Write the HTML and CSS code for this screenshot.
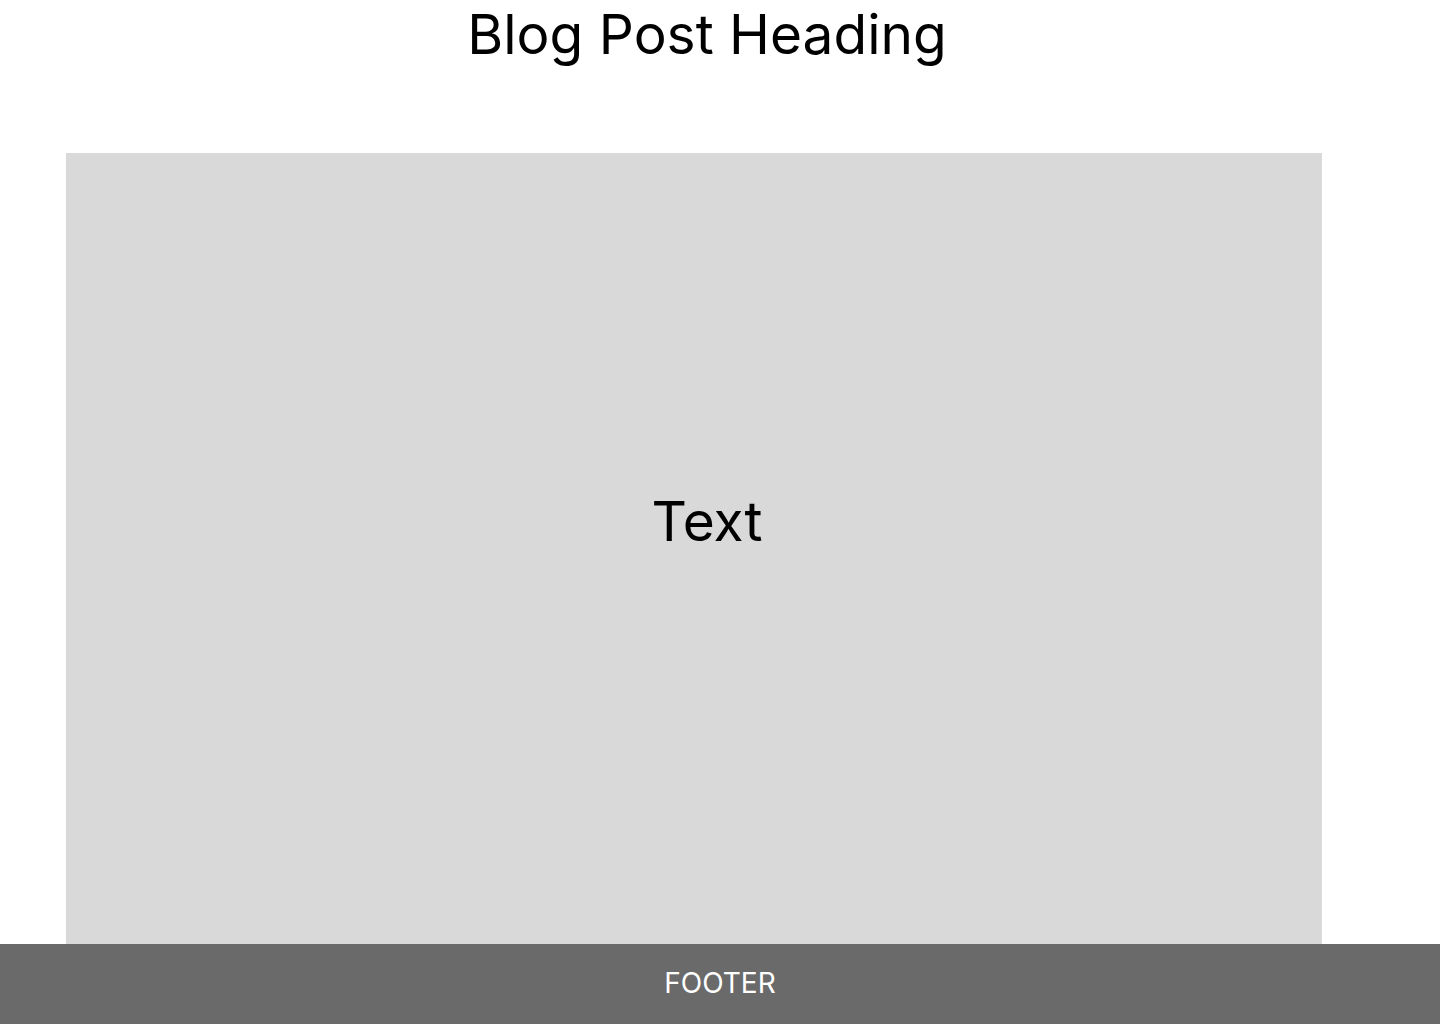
FILE: index.html
```html
<!DOCTYPE html>
<html lang="en">
<head>
<meta charset="utf-8">
<title>Blog Post</title>
<link rel="stylesheet" href="styles.css">
</head>
<body>
<main class="main">
  <h1 class="heading">Blog Post Heading</h1>
  <section class="content">
    <p class="content-text">Text</p>
  </section>
</main>
<footer class="footer">FOOTER</footer>
</body>
</html>
```

FILE: styles.css
```css
* { box-sizing: border-box; }
html, body { margin: 0; padding: 0; }
body {
  font-family: Inter, "Noto Sans", sans-serif;
  color: #000;
  background: #fff;
  width: 1440px;
  height: 1024px;
  overflow: hidden;
}
.main {
  width: 1414px;
}
.heading {
  margin: 0;
  font-size: 55px;
  font-weight: 400;
  line-height: 68px;
  text-align: center;
}
.content {
  margin: 85px 0 0 66px;
  width: 1256px;
  height: 791px;
  background: #d9d9d9;
  padding: 334px 0 0 26px;
}
.content-text {
  margin: 0;
  font-size: 55px;
  line-height: 68px;
  text-align: center;
}
.footer {
  height: 80px;
  background: #6a6a6a;
  color: #fff;
  font-size: 28px;
  line-height: 78px;
  text-align: center;
}
```
